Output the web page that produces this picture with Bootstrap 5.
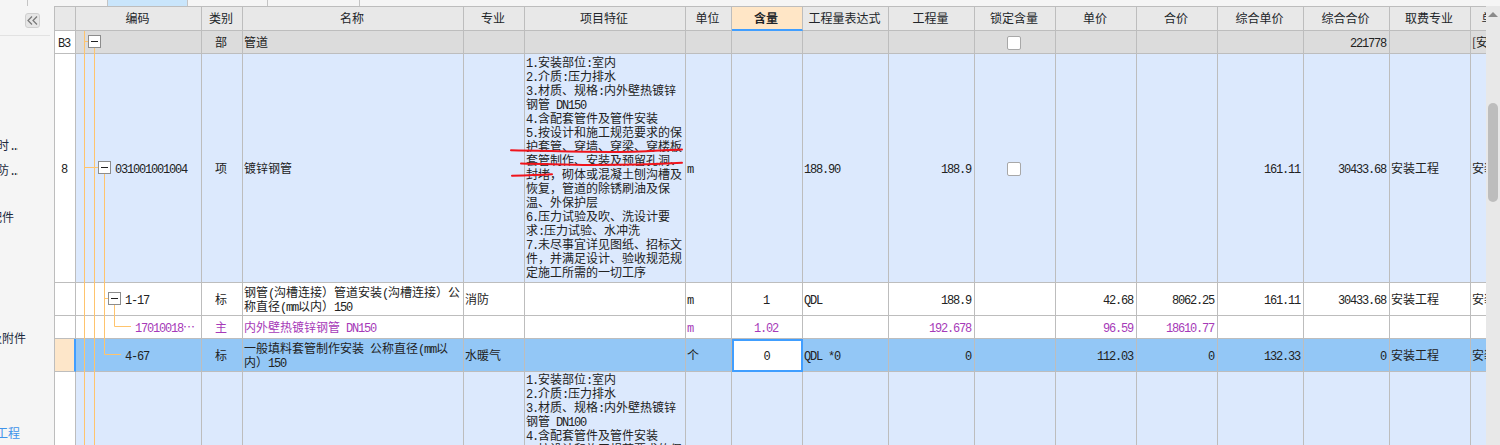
<!DOCTYPE html>
<html lang="zh-CN">

<head>
  <meta charset="UTF-8">
  <title>分部分项工程量清单</title>
  <link href="https://cdn.jsdelivr.net/npm/bootstrap@5.3.0/dist/css/bootstrap.min.css" rel="stylesheet">
  <style>
    html, body { height: 445px; overflow: hidden; }
    body { font: 12px/14px "Noto Sans CJK SC", "Liberation Sans", sans-serif; color: #222; background: #f5f5f5; }

    /* top tab strip */
    .tab-strip { height: 6px; background: #f5f5f5; }
    .tab-piece { height: 6px; border-right: 1px solid #c4c4c4; }
    .tab-active { background: #c9e5fb; }

    /* left tree panel, clipped on its left side */
    .side-panel { width: 55px; height: 439px; border-right: 1px solid #bdbdbd; background: #f5f5f5; }
    .collapse-btn { width: 15px; height: 15px; margin: 7px 0 0 25px; background: #e6e6e6; border: 1px solid #cfcfcf; border-radius: 3px; }
    .side-rule { width: 50px; height: 1px; margin-top: 7px; background: #e2e2e2; }
    .side-item { height: 14px; color: #1c2b3d; }
    .side-link { color: #3f93ea; }
    .item-a { width: 18px; margin-top: 102px; }
    .item-b { width: 18px; margin-top: 11px; }
    .item-c { width: 14px; margin-top: 33px; }
    .item-d { width: 26px; margin-top: 107px; }
    .item-e { width: 20px; margin-top: 81px; }
    .dots { font-family: "Liberation Mono", monospace; letter-spacing: -4.2px; line-height: 0; }

    /* grid */
    .grid-wrap { width: 1431px; height: 439px; }
    .qty-table { width: 1512px; table-layout: fixed; border-collapse: separate; border-spacing: 0; border-top: 1px solid #bdbdbd; }
    .qty-table.table > :not(caption) > * > * { padding: 0 3px 1px 1px; line-height: 14px; vertical-align: middle; border: 0 solid #bdbdbd; border-width: 0 1px 1px 0; }
    .qty-table.table > thead > tr > th { height: 24px; font-weight: 400; text-align: center; white-space: nowrap; overflow: hidden; --bs-table-bg: #e8e8e8; }
    .qty-table.table > thead > tr > th.col-focus { --bs-table-bg: #ffe6c6; font-weight: 700; border-bottom: 2px solid #409eff; }
    .row-part { --bs-table-bg: #dcdcdc; }
    .row-item { --bs-table-bg: #dce9fd; }
    .row-plain { --bs-table-bg: #fff; }
    .row-main { --bs-table-bg: #fff; }
    .row-active { --bs-table-bg: #93c7f6; }
    .qty-table.table > tbody > tr > td { color: #222; }
    .qty-table.table > tbody > tr.row-main > td { color: #a63ab8; }
    .qty-table.table > tbody > tr > td.row-no { --bs-table-bg: #fff; text-align: center; }
    .qty-table.table > tbody > tr > td.row-no-active { --bs-table-bg: #fde6c9; border-right: 2px solid #409eff; }
    .qty-table.table > tbody > tr > td.cell-edit { --bs-table-bg: #fff; border: 2px solid #409eff; }
    .h-part td { height: 23px; }
    .h-item td { height: 229px; }
    .h-std td { height: 33px; }
    .qty-table.table > tbody > tr.h-tail > td { height: 230px; vertical-align: top; }
    .qty-table.table > tbody > tr > td.feature-cell { padding-bottom: 2px; white-space: nowrap; overflow: hidden; }
    /* zero line-height so the latin face never stretches a 14px line */
    .as { font-family: "Liberation Mono", monospace; letter-spacing: -1.2px; line-height: 0; }
    .qty-table.table > tbody > tr > td.code-1 { padding-left: 39px; }
    .qty-table.table > tbody > tr > td.code-2 { padding-left: 49px; }
    .qty-table.table > tbody > tr > td.code-3 { padding-left: 59px; }
    .lock-box.form-check-input { width: 14px; height: 14px; margin: 2px 0 0; display: block; border-color: #a8a8a8; border-radius: 2px; }

    /* overlays */
    .tree-lines { left: 0; top: 0; width: 1431px; height: 439px; pointer-events: none; }

    /* scrollbar */
    .v-scroll { width: 14px; height: 440px; background: #e8e8e8; }
    .scroll-arrow { width: 0; height: 0; margin: 6px auto 0; border: 5px solid transparent; border-top: 0; border-bottom-color: #8a8a8a; }
    .scroll-thumb { width: 10px; height: 99px; margin: 86px 0 0 2px; background: #bdbdbd; border-radius: 5px; }
  </style>
</head>

<body>
  <div class="tab-strip d-flex">
    <div class="tab-piece" style="width: 28px"></div>
    <div class="tab-piece" style="width: 80px"></div>
    <div class="tab-piece tab-active" style="width: 80px"></div>
    <div class="tab-piece" style="width: 80px"></div>
    <div class="tab-piece" style="width: 92px"></div>
  </div>

  <div class="d-flex">
    <div class="side-panel flex-shrink-0 overflow-hidden">
      <div class="collapse-btn d-flex align-items-center justify-content-center">
        <svg width="11" height="9" viewBox="0 0 11 9" fill="none" stroke="#777" stroke-width="1.2">
          <path d="M5 .5 1 4.5l4 4M10 .5 6 4.5l4 4" />
        </svg>
      </div>
      <div class="side-rule"></div>
      <div class="side-item item-a d-flex justify-content-end text-nowrap overflow-hidden"><span class="flex-shrink-0">时<span class="dots">...</span></span></div>
      <div class="side-item item-b d-flex justify-content-end text-nowrap overflow-hidden"><span class="flex-shrink-0">防<span class="dots">...</span></span></div>
      <div class="side-item item-c d-flex justify-content-end text-nowrap overflow-hidden"><span class="flex-shrink-0">配件</span></div>
      <div class="side-item item-d d-flex justify-content-end text-nowrap overflow-hidden"><span class="flex-shrink-0">及附件</span></div>
      <div class="side-item side-link item-e d-flex justify-content-end text-nowrap overflow-hidden"><span class="flex-shrink-0">工程</span></div>
    </div>

    <div class="grid-wrap position-relative overflow-hidden flex-shrink-0">
      <table class="table mb-0 qty-table">
        <colgroup>
          <col style="width: 21px"><col style="width: 126px"><col style="width: 41px"><col style="width: 221px">
          <col style="width: 61px"><col style="width: 161px"><col style="width: 46px"><col style="width: 71px">
          <col style="width: 86px"><col style="width: 86px"><col style="width: 81px"><col style="width: 81px">
          <col style="width: 81px"><col style="width: 86px"><col style="width: 86px"><col style="width: 81px">
          <col style="width: 96px">
        </colgroup>
        <thead>
          <tr>
            <th></th><th>编码</th><th>类别</th><th>名称</th><th>专业</th><th>项目特征</th><th>单位</th>
            <th class="col-focus">含量</th><th>工程量表达式</th><th>工程量</th><th>锁定含量</th><th>单价</th>
            <th>合价</th><th>综合单价</th><th>综合合价</th><th>取费专业</th><th>单价构成文件</th>
          </tr>
        </thead>
        <tbody>
          <tr class="row-part h-part">
            <td class="row-no"><span class="as">B3</span></td><td></td><td class="text-center">部</td><td>管道</td><td></td><td></td><td></td><td></td><td></td><td></td>
            <td><input class="form-check-input lock-box mx-auto" type="checkbox" aria-label="锁定含量"></td>
            <td></td><td></td><td></td><td class="text-end"><span class="as">221778</span></td><td></td><td class="text-nowrap">[安装工程]</td>
          </tr>
          <tr class="row-item h-item">
            <td class="row-no"><span class="as">8</span></td>
            <td class="code-1"><span class="as">031001001004</span></td>
            <td class="text-center">项</td>
            <td>镀锌钢管</td>
            <td></td>
            <td class="feature-cell">
              <span class="as">1.</span>安装部位<span class="as">:</span>室内<br>
              <span class="as">2.</span>介质<span class="as">:</span>压力排水<br>
              <span class="as">3.</span>材质、规格<span class="as">:</span>内外壁热镀锌<br>
              钢管<span class="as"> DN150</span><br>
              <span class="as">4.</span>含配套管件及管件安装<br>
              <span class="as">5.</span>按设计和施工规范要求的保<br>
              护套管、穿墙、穿梁、穿楼板<br>
              套管制作、安装及预留孔洞、<br>
              封堵，砌体或混凝土刨沟槽及<br>
              恢复，管道的除锈刷油及保<br>
              温、外保护层<br>
              <span class="as">6.</span>压力试验及吹、洗设计要<br>
              求<span class="as">:</span>压力试验、水冲洗<br>
              <span class="as">7.</span>未尽事宜详见图纸、招标文<br>
              件，并满足设计、验收规范规<br>
              定施工所需的一切工序
            </td>
            <td><span class="as">m</span></td>
            <td></td>
            <td><span class="as">188.90</span></td>
            <td class="text-end"><span class="as">188.9</span></td>
            <td><input class="form-check-input lock-box mx-auto" type="checkbox" aria-label="锁定含量"></td>
            <td></td><td></td>
            <td class="text-end"><span class="as">161.11</span></td>
            <td class="text-end"><span class="as">30433.68</span></td>
            <td>安装工程</td>
            <td class="text-nowrap">安装工程</td>
          </tr>
          <tr class="row-plain h-std">
            <td class="row-no"></td>
            <td class="code-2"><span class="as">1-17</span></td>
            <td class="text-center">标</td>
            <td class="text-nowrap">钢管<span class="as">(</span>沟槽连接）管道安装<span class="as">(</span>沟槽连接）公<br>称直径<span class="as">(mm</span>以内）<span class="as">150</span></td>
            <td>消防</td>
            <td></td>
            <td><span class="as">m</span></td>
            <td class="text-center"><span class="as">1</span></td>
            <td><span class="as">QDL</span></td>
            <td class="text-end"><span class="as">188.9</span></td>
            <td></td>
            <td class="text-end"><span class="as">42.68</span></td>
            <td class="text-end"><span class="as">8062.25</span></td>
            <td class="text-end"><span class="as">161.11</span></td>
            <td class="text-end"><span class="as">30433.68</span></td>
            <td>安装工程</td>
            <td class="text-nowrap">安装工程</td>
          </tr>
          <tr class="row-main h-part">
            <td class="row-no"></td>
            <td class="code-3 text-nowrap"><span class="as">17010018</span>⋯</td>
            <td class="text-center">主</td>
            <td class="text-nowrap">内外壁热镀锌钢管<span class="as"> DN150</span></td>
            <td></td><td></td>
            <td><span class="as">m</span></td>
            <td class="text-center"><span class="as">1.02</span></td>
            <td></td>
            <td class="text-end"><span class="as">192.678</span></td>
            <td></td>
            <td class="text-end"><span class="as">96.59</span></td>
            <td class="text-end"><span class="as">18610.77</span></td>
            <td></td><td></td><td></td><td></td>
          </tr>
          <tr class="row-active h-std">
            <td class="row-no row-no-active"></td>
            <td class="code-2"><span class="as">4-67</span></td>
            <td class="text-center">标</td>
            <td class="text-nowrap">一般填料套管制作安装<span class="as"> </span>公称直径<span class="as">(mm</span>以<br>内）<span class="as">150</span></td>
            <td>水暖气</td>
            <td></td>
            <td>个</td>
            <td class="text-center cell-edit"><span class="as">0</span></td>
            <td><span class="as">QDL *0</span></td>
            <td class="text-end"><span class="as">0</span></td>
            <td></td>
            <td class="text-end"><span class="as">112.03</span></td>
            <td class="text-end"><span class="as">0</span></td>
            <td class="text-end"><span class="as">132.33</span></td>
            <td class="text-end"><span class="as">0</span></td>
            <td>安装工程</td>
            <td class="text-nowrap">安装工程</td>
          </tr>
          <tr class="row-item h-tail">
            <td class="row-no"></td><td></td><td></td><td></td><td></td>
            <td class="feature-cell">
              <span class="as">1.</span>安装部位<span class="as">:</span>室内<br>
              <span class="as">2.</span>介质<span class="as">:</span>压力排水<br>
              <span class="as">3.</span>材质、规格<span class="as">:</span>内外壁热镀锌<br>
              钢管<span class="as"> DN100</span><br>
              <span class="as">4.</span>含配套管件及管件安装<br>
              <span class="as">5.</span>按设计和施工规范要求的保
            </td>
            <td></td><td></td><td></td><td></td><td></td><td></td><td></td><td></td><td></td><td></td><td></td>
          </tr>
        </tbody>
      </table>

      <!-- tree connectors and expanders, then the red pen strokes. origin is the grid's top left -->
      <svg class="tree-lines position-absolute" viewBox="0 0 1431 439" fill="none">
        <g transform="translate(-55 -6)">
          <g stroke="#ffc46d" stroke-width="1">
            <path d="M84.5 31V445M94.5 48V445M104.5 174V354.5H121M114.5 304V326.5H131" />
            <path d="M85 41.5H88M85 167.5H98M105 298.5H108" />
          </g>
          <g fill="#fff" stroke="#8c8c8c">
            <rect x="88.5" y="35.5" width="12" height="12" />
            <rect x="98.5" y="161.5" width="12" height="12" />
            <rect x="108.5" y="292.5" width="12" height="12" />
          </g>
          <path d="M91 41.5H98M101 167.5H108M111 298.5H118" stroke="#222" />
          <g stroke="#f0141c" stroke-width="2" stroke-linecap="round">
            <path d="M511 150.2C560 151 600 153 640 151.5 660 150.5 672 149.8 682 149.5" />
            <path d="M521 163.4C550 164 570 165 590 165 630 165 660 164 682 162.8" />
            <path d="M512 175.8C525 175.5 540 175 552 174.3" />
          </g>
        </g>
      </svg>
    </div>

    <div class="v-scroll flex-shrink-0 overflow-hidden">
      <div class="scroll-arrow"></div>
      <div class="scroll-thumb"></div>
    </div>
  </div>

  <script src="https://cdn.jsdelivr.net/npm/bootstrap@5.3.0/dist/js/bootstrap.bundle.min.js"></script>
</body>

</html>
